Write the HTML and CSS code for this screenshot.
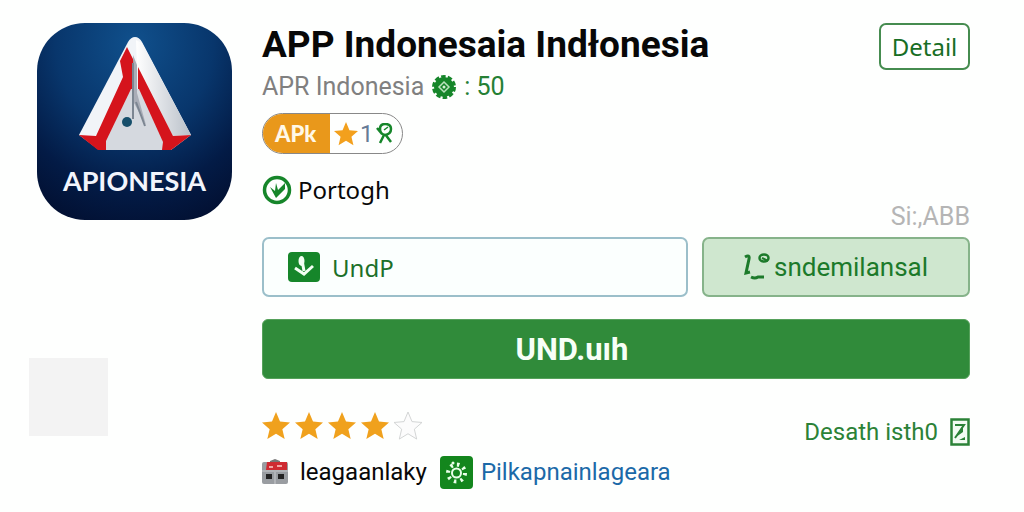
FILE: index.html
```html
<!DOCTYPE html>
<html lang="id">
<head>
<meta charset="utf-8">
<title>APP Indonesia</title>
<link rel="stylesheet" href="styles.css">
</head>
<body>
<svg class="defs" aria-hidden="true">
  <symbol id="star" viewBox="0 0 30 30"><path d="M15 0l4.300 10.300L30 11.200l-8.200 7.200L24.300 29 15 23.300 5.700 29l2.500-10.600L0 11.200l10.700-.9z"/></symbol>
</svg>
<main class="page">
  <aside class="side">
    <div class="app-icon">
      <svg class="emblem" viewBox="0 0 114 116" aria-hidden="true">
        <defs><linearGradient id="silver" x2="1"><stop offset="0" stop-color="#fff"/><stop offset="1" stop-color="#b9c0c9"/></linearGradient></defs>
        <path d="M57 0q-4 0-7 5L1 98l20 15h72l20-15L64 5q-3-5-7-5z" fill="#f1f4f8"/>
        <path d="M58 3l6 3 49 92-18 1-36-68z" fill="url(#silver)"/>
        <path d="M49 10l7 14v30L29 113H20L1 98l17 1 27-59-3-16z" fill="#d5141c"/>
        <path d="M60 30l35 69 18-1-20 15h-9L60 53z" fill="#d5141c"/>
        <path d="M53 52h8l24 53-1 8H28v-9z" fill="#d5d9df"/>
        <path d="M55 18l4 10v28l9 32-12-22z" fill="#a9adb7"/>
        <path d="M55 26v56M58 65l9 24" fill="none" stroke="#7c8692" stroke-width="2"/>
        <circle cx="49" cy="85" r="5" fill="#174f6b"/>
      </svg>
      <span class="app-icon-name">APIONESIA</span>
    </div>
    <div class="placeholder"></div>
  </aside>

  <section class="details">
    <header class="head">
      <div>
        <h1 class="title">APP Indonesaia Indłonesia</h1>
        <p class="publisher">APR Indonesia
          <svg class="seal" viewBox="0 0 24 24" aria-hidden="true"><circle cx="12" cy="12" r="10" fill="#16862a"/><circle cx="12" cy="12" r="10" fill="none" stroke="#16862a" stroke-width="4" stroke-dasharray="4.300 2"/><path d="M12 7l5 5-5 5-5-5z" fill="none" stroke="#b9e2bd" stroke-width="1.500"/><circle cx="12" cy="12" r="1.500" fill="#d5f0d7"/></svg>
          <span class="count">: 50</span></p>
      </div>
      <button class="detail-button" type="button">Detail</button>
    </header>

    <div class="badge">
      <span class="badge-type">APk</span>
      <span class="badge-score">
        <svg class="badge-star" aria-hidden="true"><use href="#star"/></svg>
        <span>1</span>
        <svg class="ribbon" viewBox="0 0 18 22" aria-hidden="true"><path d="M9 1q6 0 6 5t-6 6q-5-1-5-6t5-5zM1 5l5 6M8 12l-4 8M9 11l6 8" fill="none" stroke="#16862a" stroke-width="2.500"/><path d="M8 7l4-3" stroke="#16862a" stroke-width="1.500"/></svg>
      </span>
    </div>

    <div class="meta">
      <span class="verified">
        <svg class="verified-icon" viewBox="0 0 30 30" aria-hidden="true"><circle cx="15" cy="15" r="12.500" fill="none" stroke="#16862a" stroke-width="3.500"/><path d="M8 12l5 4 1-8 2 7 7-7v6l-9 9z" fill="#16862a"/></svg>
        Portogh
      </span>
      <span class="version">Si:,ABB</span>
    </div>

    <div class="actions">
      <button class="option" type="button">
        <svg class="download-icon" viewBox="0 0 32 30" aria-hidden="true"><rect width="32" height="30" rx="4" fill="#16862a"/><ellipse cx="13.500" cy="9" rx="3" ry="5" fill="#f3fff3"/><path d="M14 8l2 11M7 16l9 6 9-8" fill="none" stroke="#f3fff3" stroke-width="3"/></svg>
        UndP
      </button>
      <button class="option option-soft" type="button">
        <svg class="key-icon" viewBox="0 0 26 28" aria-hidden="true"><path d="M1 4q5-3 4 2l-3 14 4-1M7 24q4 2 7 0h6" fill="none" stroke="#1c7a2a" stroke-width="3"/><ellipse cx="20" cy="5" rx="4.500" ry="3.500" fill="none" stroke="#1c7a2a" stroke-width="2.500"/><path d="M18 5l6 3" stroke="#1c7a2a" stroke-width="2"/></svg>
        sndemilansal
      </button>
    </div>

    <button class="primary" type="button">UND.uıh</button>

    <div class="rating">
      <div class="stars" role="img" aria-label="4 / 5">
        <svg class="star"><use href="#star"/></svg>
        <svg class="star"><use href="#star"/></svg>
        <svg class="star"><use href="#star"/></svg>
        <svg class="star"><use href="#star"/></svg>
        <svg class="star star-empty"><use href="#star"/></svg>
      </div>
      <a class="more" href="#">Desath isth0
        <svg class="more-icon" viewBox="0 0 20 28" aria-hidden="true"><rect x="1.500" y="1.500" width="17" height="25" fill="#f2fbf2" stroke="#2b8237" stroke-width="2.500"/><path d="M5 7h9L5 20" fill="none" stroke="#2b8237" stroke-width="2"/><path d="M13 7v7l-7 5zM9 22l6-3v3z" fill="#2b8237"/></svg>
      </a>
    </div>

    <footer class="links">
      <svg class="shop-icon" viewBox="0 0 26 26" aria-hidden="true"><path d="M8 4V2l5-2 5 2v2" fill="#777"/><rect y="3" width="26" height="22" rx="2" fill="#999da1"/><path d="M5 3h20v8H4z" fill="#cf2b32"/><path d="M7 8h4M15 7h5" stroke="#f1a5a5" stroke-width="2"/><path d="M0 12h26M13 13v12" stroke="#c9cccf" stroke-width="1"/><path d="M4 15h6v5H4zM16 15h6v5h-6z" fill="#222"/></svg>
      <span class="category">leagaanlaky</span>
      <svg class="site-icon" viewBox="0 0 33 33" aria-hidden="true"><rect width="33" height="33" rx="4" fill="#13861d"/><circle cx="16.500" cy="17" r="4.500" fill="none" stroke="#eaffea" stroke-width="2"/><circle cx="16.500" cy="17" r="8.500" fill="none" stroke="#eaffea" stroke-width="4" stroke-dasharray="2.500 4.200"/><circle cx="13" cy="7" r="1.500" fill="#eaffea"/></svg>
      <a class="site" href="#">Pilkapnainlageara</a>
    </footer>
  </section>
</main>
</body>
</html>
```
FILE: styles.css
```css
* { box-sizing: border-box; }
body {
  margin: 0;
  background: #fefffe;
  color: #080808;
  font-family: Roboto, "Liberation Sans", sans-serif;
  font-size: 25px;
}
h1, p { margin: 0; }
svg { display: block; flex: none; }
button { font: inherit; cursor: pointer; }
a { text-decoration: none; }
.defs { position: absolute; width: 0; height: 0; }

.page {
  display: flex;
  gap: 30px;
  padding: 23px 54px 20px 29px;
}
.side {
  flex: none;
  width: 203px;
  display: flex;
  flex-direction: column;
  gap: 138px;
}
.app-icon {
  width: 195px;
  height: 197px;
  margin-left: 8px;
  padding-top: 14px;
  border-radius: 48px;
  background: radial-gradient(ellipse 90% 100% at 50% 10%, #10508c 0%, #08366c 45%, #031b46 75%, #020f30 100%);
  display: flex;
  flex-direction: column;
  align-items: center;
  gap: 12px;
}
.emblem { width: 114px; height: 116px; }
.app-icon-name {
  color: #f2f5fc;
  font-family: Lato, sans-serif;
  font-size: 27px;
  font-weight: 700;
  line-height: 32px;
}
.placeholder { width: 79px; height: 78px; background: #f3f3f3; }

.details { flex: 1; min-width: 0; display: flex; flex-direction: column; }
.head { display: flex; justify-content: space-between; align-items: flex-start; }
.title { font-size: 37px; font-weight: 700; line-height: 44px; }
.publisher {
  display: flex;
  align-items: center;
  gap: 8px;
  color: #808080;
  line-height: 40px;
}
.seal { width: 24px; height: 24px; }
.count { color: #258034; }
.detail-button {
  width: 91px;
  height: 47px;
  padding: 0;
  border: 2px solid #468c50;
  border-radius: 7px;
  background: #fff;
  color: #186e25;
  font-family: "Noto Sans", sans-serif;
  font-size: 24px;
  line-height: 38px;
}

.badge {
  align-self: flex-start;
  display: flex;
  height: 41px;
  margin-top: 6px;
  border: 1px solid #888;
  border-radius: 21px;
  overflow: hidden;
}
.badge-type {
  width: 67px;
  padding-left: 12px;
  background: #e9981b;
  color: #fff8e8;
  font-family: Lato, sans-serif;
  font-size: 22px;
  font-weight: 900;
  line-height: 40px;
}
.badge-score {
  display: flex;
  align-items: center;
  gap: 2px;
  padding: 0 8px 0 4px;
  color: #667b96;
  font-size: 24px;
}
.badge-star { width: 24px; height: 24px; fill: #f3a01d; }
.ribbon { width: 18px; height: 22px; }

.meta {
  display: flex;
  justify-content: space-between;
  height: 58px;
  margin-top: 19px;
}
.verified {
  display: flex;
  align-items: center;
  gap: 6px;
  height: 34px;
  font-family: "Noto Sans", sans-serif;
  font-size: 24px;
  line-height: 32px;
}
.verified-icon { width: 30px; height: 30px; }
.version { align-self: flex-end; color: #b5b5b5; font-size: 25px; line-height: 28px; }

.actions {
  display: grid;
  grid-template-columns: 426fr 268fr;
  gap: 14px;
  margin-top: 6px;
}
.option {
  display: flex;
  align-items: center;
  gap: 12px;
  height: 60px;
  padding: 0 24px;
  border: 2px solid #9bbfca;
  border-radius: 7px;
  background: #fbfffe;
  color: #1c7029;
  font-family: "Noto Sans", sans-serif;
  font-size: 24px;
}
.option-soft {
  justify-content: center;
  gap: 4px;
  border-color: #86b38a;
  background: #cfe7cf;
  color: #1c7a2a;
  font-family: Roboto, sans-serif;
  font-size: 26px;
}
.download-icon { width: 32px; height: 30px; }
.key-icon { width: 26px; height: 28px; }
.primary {
  height: 60px;
  margin-top: 22px;
  padding: 0 88px 0 0;
  border: 1px solid #56a15b;
  border-radius: 6px;
  background: #308b3a;
  color: #f7fff7;
  font-size: 31px;
  font-weight: 700;
}

.rating {
  display: flex;
  justify-content: space-between;
  align-items: flex-end;
  height: 42px;
  margin-top: 26px;
}
.stars { display: flex; gap: 5px; align-self: center; }
.star { width: 28px; height: 30px; fill: #f0a11d; overflow: visible; }
.star-empty { fill: #fcfcfc; stroke: #d0d2d2; stroke-width: 1px; }
.more {
  display: flex;
  align-items: center;
  gap: 12px;
  color: #2b8237;
  font-size: 24px;
  line-height: 30px;
}
.more-icon { width: 20px; height: 28px; }

.links { display: flex; align-items: center; height: 34px; margin-top: 8px; }
.shop-icon { width: 26px; height: 26px; margin-right: 12px; }
.category { font-size: 24px; }
.site-icon { width: 33px; height: 33px; margin: 0 8px 0 13px; }
.site { color: #1b69a8; font-size: 24px; }
```
